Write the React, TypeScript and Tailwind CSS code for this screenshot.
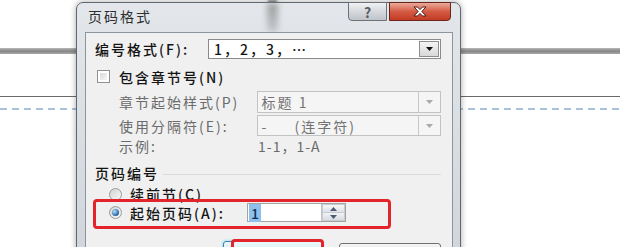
import React from "react";

function Caret({ disabled }: { disabled?: boolean }) {
  return (
    <svg width="7" height="4" viewBox="0 0 7 4">
      <path d="M0 0h7L3.5 4z" fill={disabled ? "#a9a9a9" : "#111"} />
    </svg>
  );
}

function ComboBox({
  className,
  disabled,
  children,
}: {
  className: string;
  disabled?: boolean;
  children: React.ReactNode;
}) {
  return (
    <div
      className={`flex border ${
        disabled
          ? "border-[#c3c3c3] bg-[#f5f5f5] text-[#737373]"
          : "border-[#8a8a8a] bg-white text-[#151515]"
      } ${className}`}
    >
      <div className="flex flex-1 items-center pl-[4px] leading-none">{children}</div>
      {disabled ? (
        <div className="flex w-[22px] items-center justify-center border-l border-[#c8c8c8]">
          <Caret disabled />
        </div>
      ) : (
        <div className="m-[1px] flex w-[20px] items-center justify-center border border-[#8d8d8d] bg-gradient-to-b from-[#f4f4f4] to-[#d9d9d9]">
          <Caret />
        </div>
      )}
    </div>
  );
}

function Radio({ checked }: { checked?: boolean }) {
  return (
    <span className="flex h-[13px] w-[13px] shrink-0 items-center justify-center rounded-full border border-[#9a9b9b] bg-gradient-to-br from-[#d2d2d2] to-[#f8f8f8]">
      {checked && (
        <span className="h-[7px] w-[7px] rounded-full bg-[radial-gradient(circle_at_35%_35%,#b7e1f8,#2a6aa8_65%,#1b4a7a)]" />
      )}
    </span>
  );
}

function CloseGlyph() {
  return (
    <svg width="14" height="11" viewBox="0 0 14 11">
      <path
        d="M1 1h3.5L7 3.6 9.5 1H13L8.8 5.5 13 10H9.5L7 7.4 4.5 10H1l4.2-4.5z"
        fill="#fff"
        stroke="#4a1c14"
        strokeWidth="1"
        strokeLinejoin="round"
      />
    </svg>
  );
}

function Dialog() {
  return (
    <div className="absolute left-[76px] top-[2px] h-[262px] w-[385px] rounded-t-[7px] border border-[#5f6771] bg-gradient-to-b from-[#e3e7eb] to-[#cfd5db] pl-[8px] pr-[7px] shadow-[0_0_6px_rgba(0,0,0,0.35)]">
      {/* title bar */}
      <div className="relative flex h-[29px] items-start justify-between">
        <div className="pointer-events-none absolute left-[182px] top-0 h-[29px] w-[11px] bg-gradient-to-b from-[#7d7d7d] to-[#b9bcbf] opacity-70 blur-[3px]" />
        <div className="relative flex h-[26px] items-center pl-[3px] text-[14px] leading-none tracking-[2px] text-[#2e2e2e]">
          页码格式
        </div>
        <div className="relative -mt-[1px] mr-[2px] flex gap-[2px]">
          <div className="flex h-[19px] w-[39px] items-center justify-center rounded-bl-[4px] border border-[#6e7176] bg-gradient-to-b from-[#f0f2f4] via-[#d5d9dd] to-[#bfc4ca] text-[14px] font-bold leading-none text-[#5a5d62]">
            ?
          </div>
          <div className="flex h-[19px] w-[62px] items-center justify-center rounded-br-[4px] border border-[#6a261c] bg-gradient-to-b from-[#eaa999] via-[#d45a44] to-[#c33a22]">
            <CloseGlyph />
          </div>
        </div>
      </div>

      {/* client area */}
      <div className="relative h-[240px] border border-[#8c949d] bg-[#f0f0f0] pl-[9px] pr-[11px] pt-[6px] text-[14px] font-medium leading-none tracking-[2px] text-[#141414]">
        <div className="flex h-[20px] items-center">
          <span className="w-[113px]">编号格式(F):</span>
          <ComboBox className="h-[20px] w-[233px]">
            <span className="pl-[1px]">1，2，3，</span>
            <span className="tracking-normal">⋯</span>
          </ComboBox>
        </div>

        <div className="mt-[10px] flex h-[15px] items-center pl-[2px]">
          <span className="h-[13px] w-[13px] border border-[#8f9090] bg-white p-[2px]">
            <span className="block h-full w-full bg-gradient-to-br from-[#d8d8d8] to-[#f7f7f7]" />
          </span>
          <span className="ml-[9px]">包含章节号(N)</span>
        </div>

        <div className="mt-[7px] flex h-[22px] items-center pl-[24px] font-normal text-[#6b6b6b]">
          <span className="w-[138px]">章节起始样式(P)</span>
          <ComboBox className="h-[22px] w-[185px]" disabled>
            <span>标题 1</span>
          </ComboBox>
        </div>

        <div className="mt-[2px] flex h-[21px] items-center pl-[24px] font-normal text-[#6b6b6b]">
          <span className="w-[138px]">使用分隔符(E):</span>
          <ComboBox className="h-[21px] w-[185px]" disabled>
            <span className="w-[33px]">-</span>
            <span>(连字符)</span>
          </ComboBox>
        </div>

        <div className="mt-[1px] flex h-[18px] items-center pl-[24px] font-normal text-[#6b6b6b]">
          <span className="w-[138px]">示例:</span>
          <span className="pl-[1px] tracking-[1px]">1-1，1-A</span>
        </div>

        <div className="mt-[9px] flex h-[18px] items-center">
          <span>页码编号</span>
          <span className="ml-[4px] mt-[2px] h-px flex-1 bg-[#dcdcdc]" />
        </div>

        <div className="mt-[4px] flex h-[16px] items-center pl-[14px]">
          <Radio />
          <span className="ml-[8px]">续前节(C)</span>
        </div>

        <div className="mt-[1px] flex h-[19px] items-center pl-[14px]">
          <Radio checked />
          <span className="ml-[8px] w-[117px]">起始页码(A):</span>
          <div className="flex h-[19px] w-[99px] border border-[#a3a3a3] bg-white">
            <div className="flex flex-1 items-center pl-[1px]">
              <span className="bg-[#8fc0ec] px-[2px] py-[2px] tracking-normal text-[#10305a]">1</span>
            </div>
            <div className="flex w-[24px] flex-col gap-px border-l border-[#c2c2c2] bg-[#c8ccd2] p-px">
              <div className="flex flex-1 items-center justify-center bg-gradient-to-b from-[#f6f7f8] to-[#dde1e6]">
                <svg width="7" height="4" viewBox="0 0 7 4">
                  <path d="M3.5 0L7 4H0z" fill="#4d5b73" />
                </svg>
              </div>
              <div className="flex flex-1 items-center justify-center bg-gradient-to-b from-[#f2f3f5] to-[#d8dce2]">
                <svg width="7" height="4" viewBox="0 0 7 4">
                  <path d="M0 0h7L3.5 4z" fill="#4d5b73" />
                </svg>
              </div>
            </div>
          </div>
        </div>

        <div className="mt-[19px] flex items-start pl-[128px]">
          <div className="h-[26px] w-[100px] rounded-[3px] border border-[#3c7fb1] bg-gradient-to-b from-[#eaf6fd] to-[#c4e5f6] shadow-[0_0_3px_#5fd0f5]" />
          <div className="ml-[16px] mt-[2px] h-[23px] w-[102px] rounded-[3px] border border-[#707070] bg-gradient-to-b from-[#f4f4f4] to-[#dedede]" />
        </div>

        {/* red annotation boxes */}
        <div className="pointer-events-none absolute left-[7px] top-[166px] h-[30px] w-[298px] rounded-[4px] border-[3px] border-[#e3242b]" />
        <div className="pointer-events-none absolute left-[145px] top-[206px] h-[40px] w-[93px] rounded-[4px] border-[3px] border-[#e3242b]" />
      </div>
    </div>
  );
}

export default function App() {
  return (
    <div className="relative h-[247px] w-[620px] overflow-hidden bg-white font-['Noto_Sans_CJK_SC','Noto_Sans',sans-serif]">
      {/* document page behind the dialog */}
      <div className="flex flex-col">
        <div className="mt-[48px] h-[6px] bg-gradient-to-b from-[#b9b9b9] via-[#868686] to-[#a8a8a8]" />
        <div className="mt-[42px] h-px bg-[#6a6a6a]" />
        <div className="mt-[11px] h-[2px] bg-[repeating-linear-gradient(90deg,#a9c3dd_0_7px,transparent_7px_12px)]" />
      </div>
      <div className="absolute left-[268px] top-0 h-[4px] w-[9px] bg-[#8a8a8a] blur-[1px]" />
      <Dialog />
    </div>
  );
}
